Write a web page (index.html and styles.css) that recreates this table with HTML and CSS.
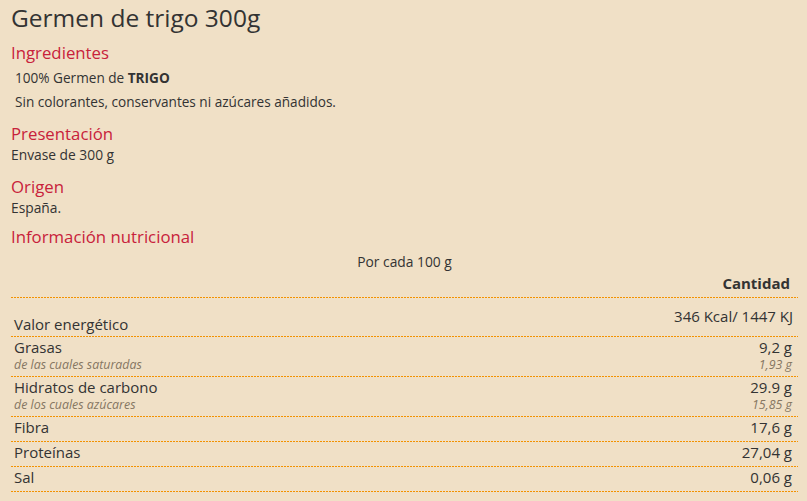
FILE: index.html
```html
<!DOCTYPE html>
<html>
	<head>
		<title>Germen de trigo 300g</title>
		<link rel="stylesheet" href="styles.css">
	</head>
	<body>

		<h1>Germen de trigo 300g</h1>

		<h2>Ingredientes</h2>
		<p class="ingredients">
			100% Germen de <b>TRIGO</b><br>
			Sin colorantes, conservantes ni azúcares añadidos.
		</p>

		<h2>Presentación</h2>
		<p>Envase de 300 g</p>

		<h2>Origen</h2>
		<p class="last">España.</p>

		<h2>Información nutricional</h2>
		<table class="nutrition">
			<caption>Por cada 100 g</caption>
			<tr class="head">
				<th></th>
				<th>Cantidad</th>
			</tr>
			<tr class="energy">
				<td class="label">Valor energético</td>
				<td class="value">346 Kcal/ 1447 KJ</td>
			</tr>
			<tr>
				<td>Grasas<span class="sub">de las cuales saturadas</span></td>
				<td class="value">9,2 g<span class="sub">1,93 g</span></td>
			</tr>
			<tr>
				<td>Hidratos de carbono<span class="sub">de los cuales azúcares</span></td>
				<td class="value">29.9 g<span class="sub">15,85 g</span></td>
			</tr>
			<tr>
				<td>Fibra</td>
				<td class="value">17,6 g</td>
			</tr>
			<tr>
				<td>Proteínas</td>
				<td class="value">27,04 g</td>
			</tr>
			<tr>
				<td>Sal</td>
				<td class="value">0,06 g</td>
			</tr>
		</table>

	</body>
</html>
```

FILE: styles.css
```css
body {
	font-family: "Open Sans", Arial, sans-serif;
	font-size: 13.8px;
	line-height: 20px;
	color: #333;
	background-color: #f0e0c6;
	margin: 0 9px 0 11px;
}

h1 {
	font-size: 24.5px;
	font-weight: normal;
	line-height: 32px;
	margin: 2px 0 8px 0;
}

h2 {
	font-size: 16.8px;
	font-weight: normal;
	line-height: 22px;
	color: #c8223b;
	margin: 0;
}

p {
	margin: 0 0 11px 0;
}

p.last {
	margin-bottom: 8px;
}

p.ingredients {
	font-size: 13.6px;
	line-height: 24px;
	margin: 2px 0 9px 4px;
}

table.nutrition {
	width: 100%;
	border-collapse: separate;
	border-spacing: 0;
	margin-top: 4px;
	font-size: 15px;
}

table.nutrition caption {
	font-size: 13.8px;
	line-height: 20px;
}

table.nutrition th,
table.nutrition td {
	padding: 0 6px 5px 3px;
	text-align: left;
	font-weight: normal;
	vertical-align: top;
	background: repeating-linear-gradient(to right, #f39200 0 2px, transparent 2px 3px) left bottom / 100% 1px no-repeat;
}

table.nutrition td:first-child,
table.nutrition th:first-child {
	width: 53%;
}

table.nutrition th {
	font-weight: bold;
	text-align: right;
	padding-top: 1px;
	padding-right: 8px;
	padding-bottom: 5px;
}

table.nutrition td.value {
	text-align: right;
}

tr.energy td.label {
	height: 36px;
	padding-bottom: 3px;
	vertical-align: bottom;
}

tr.energy td.value {
	padding-top: 8px;
	padding-right: 5px;
}

.sub {
	display: block;
	font-size: 12.4px;
	line-height: 15px;
	font-style: italic;
	color: #857662;
}
```
